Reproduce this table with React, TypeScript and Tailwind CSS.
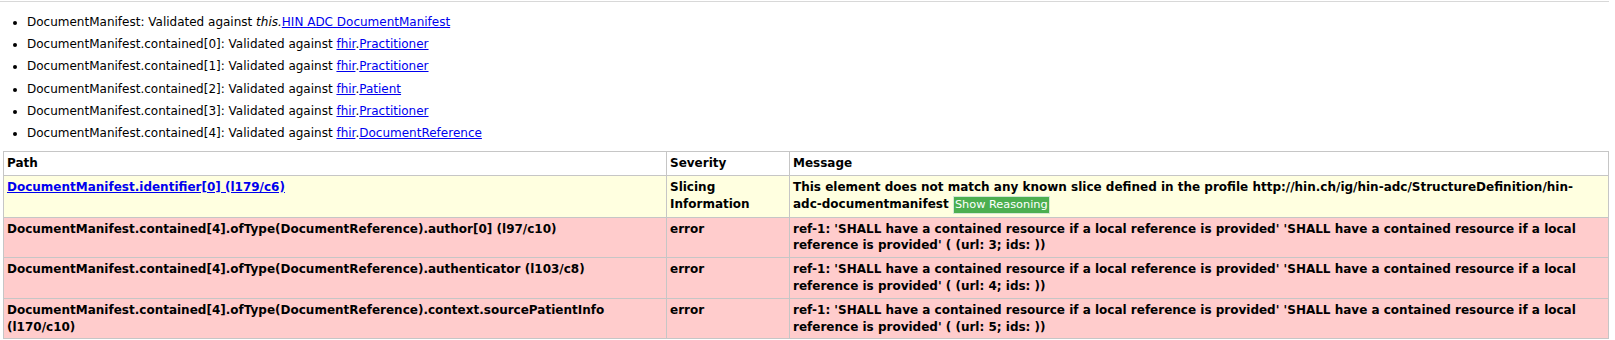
const font = { fontFamily: 'Verdana, "DejaVu Sans", sans-serif' };

const validated = [
  { path: "DocumentManifest", pre: "this", name: "HIN ADC DocumentManifest" },
  { path: "DocumentManifest.contained[0]", pre: "fhir", name: "Practitioner" },
  { path: "DocumentManifest.contained[1]", pre: "fhir", name: "Practitioner" },
  { path: "DocumentManifest.contained[2]", pre: "fhir", name: "Patient" },
  { path: "DocumentManifest.contained[3]", pre: "fhir", name: "Practitioner" },
  { path: "DocumentManifest.contained[4]", pre: "fhir", name: "DocumentReference" },
];

const msg = "ref-1: 'SHALL have a contained resource if a local reference is provided' 'SHALL have a contained resource if a local reference is provided' ( (url: ";

const errors = [
  { path: "DocumentManifest.contained[4].ofType(DocumentReference).author[0] (l97/c10)", url: 3 },
  { path: "DocumentManifest.contained[4].ofType(DocumentReference).authenticator (l103/c8)", url: 4 },
  { path: "DocumentManifest.contained[4].ofType(DocumentReference).context.sourcePatientInfo (l170/c10)", url: 5 },
];

const cell = "border border-[#c6c6c6] px-[3px] py-[3px] align-top";

export default function App() {
  return (
    <div className="bg-white w-[1615px] h-[340px] overflow-hidden text-[12px] text-black" style={font}>
      <div className="mt-[1px] h-[1px] w-[1609px] bg-[#d8d8d8]" />
      <ul className="list-disc pl-[27px] mt-[12px] mb-[9px]">
        {validated.map((v, i) => (
          <li key={i} className="leading-[17px] mb-[5.2px]">
            {v.path}: Validated against{" "}
            {v.pre === "this" ? (
              <i>this.</i>
            ) : (
              <a className="text-[#0000ee] underline">fhir</a>
            )}
            {v.pre === "fhir" && "."}
            <a className="text-[#0000ee] underline">{v.name}</a>
          </li>
        ))}
      </ul>
      <table className="ml-[3px] border-collapse font-bold leading-[16.8px] w-[1606px] table-fixed">
        <colgroup>
          <col className="w-[663px]" />
          <col className="w-[123px]" />
          <col />
        </colgroup>
        <thead>
          <tr className="bg-white text-left">
            <td className={cell}>Path</td>
            <td className={cell}>Severity</td>
            <td className={cell}>Message</td>
          </tr>
        </thead>
        <tbody>
          <tr className="bg-[#ffffe0]">
            <td className={cell}>
              <a className="text-[#0000ee] underline">DocumentManifest.identifier[0] (l179/c6)</a>
            </td>
            <td className={cell}>Slicing Information</td>
            <td className={cell}>
              This element does not match any known slice defined in the profile
              http://hin.ch/ig/hin-adc/StructureDefinition/hin-
              <br />
              adc-documentmanifest{" "}
              <span className="inline-block bg-[#4caf50] text-white font-normal text-[11.3px] leading-[16px] px-[1px] border border-[#d4e8d4]">
                Show Reasoning
              </span>
            </td>
          </tr>
          {errors.map((e, i) => (
            <tr key={i} className="bg-[#ffcccc]">
              <td className={cell}>{e.path}</td>
              <td className={cell}>error</td>
              <td className={cell}>
                {msg}
                {e.url}; ids: ))
              </td>
            </tr>
          ))}
        </tbody>
      </table>
    </div>
  );
}
